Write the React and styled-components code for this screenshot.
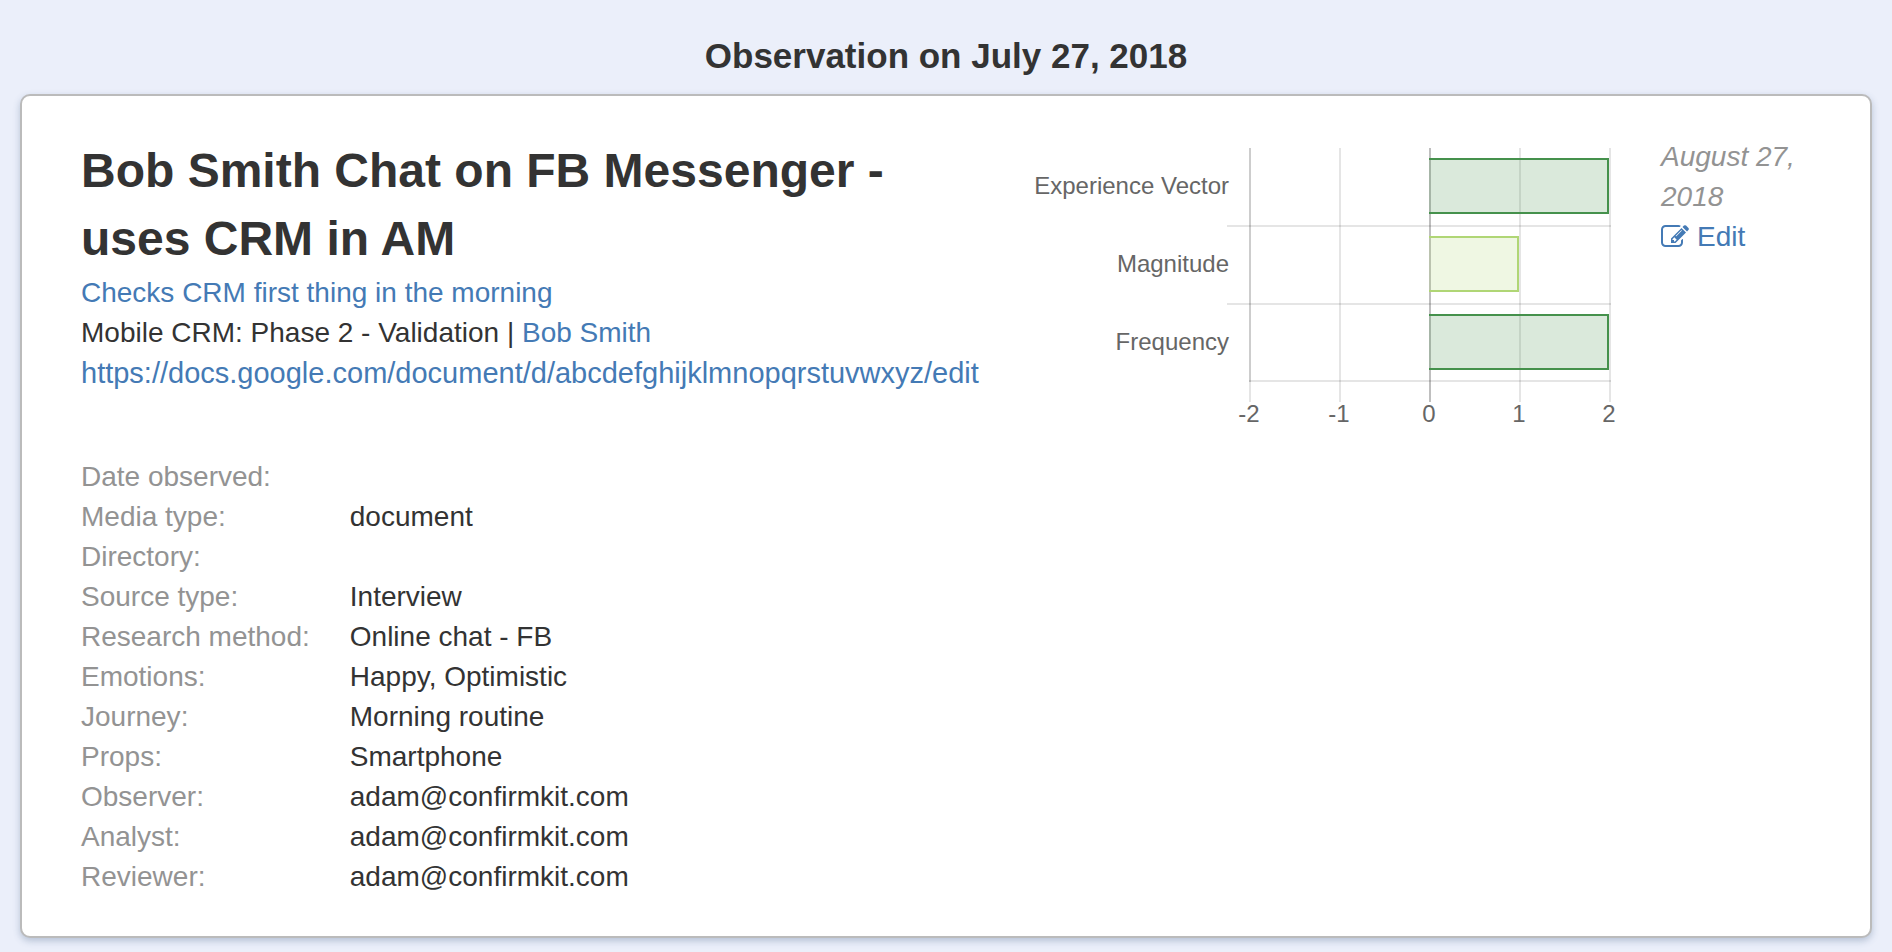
import React from 'react'
import styled, {createGlobalStyle} from "styled-components";

const GlobalStyle = createGlobalStyle`
  * {
    box-sizing: border-box;
  }

  body {
    margin: 0;
    background: #ebeffa;
    color: #333;
    font-family: "Helvetica Neue", "Liberation Sans", Arial, sans-serif;
    font-size: 28px;
    line-height: 40px;
  }
`;

const Page = styled.main`
  padding: 36px 20px 14px;
`;

const PageTitle = styled.h2`
  margin: 0 0 18px;
  font-size: 35px;
  line-height: 40px;
  font-weight: bold;
  text-align: center;
`;

const Card = styled.article`
  padding: 41px 59px 39px;
  background: #fff;
  border: 2px solid #bbb;
  border-radius: 10px;
  box-shadow: 0 3px 7px rgba(60, 90, 130, 0.3);
`;

const CardTop = styled.div`
  display: grid;
  grid-template-columns: minmax(0, 1fr) 600px 150px;
  column-gap: 40px;
  margin-bottom: 20px;
`;

const Summary = styled.div`
  white-space: nowrap;
`;

const Title = styled.h3`
  margin: 0;
  font-size: 48px;
  line-height: 68px;
  font-weight: bold;
  white-space: normal;
`;

const Link = styled.a`
  color: #447ab5;
  text-decoration: none;

  &:hover {
    text-decoration: underline;
  }
`;

const SourceLink = styled(Link)`
  display: block;
  font-size: 29px;
`;

const DateText = styled.div`
  color: #939393;
  font-style: italic;
`;

const EditLink = styled(Link)`
  display: flex;
  align-items: center;
  gap: 8px;
`;

const ChartSvg = styled.svg`
  display: block;
  width: 100%;
  height: auto;
  font-size: 24px;
  fill: #666;
`;

const Details = styled.dl`
  display: grid;
  grid-template-columns: max-content 1fr;
  column-gap: 40px;
  grid-auto-rows: 40px;
  margin: 0;
`;

const Label = styled.dt`
  color: #939393;
`;

const Value = styled.dd`
  margin: 0;
`;

const scores = [
    {name: 'Experience Vector', value: 2, color: '#45914c'},
    {name: 'Magnitude', value: 1, color: '#b0d675'},
    {name: 'Frequency', value: 2, color: '#45914c'}
];

const ticks = [-2, -1, 0, 1, 2];

const details = [
    {label: 'Date observed', value: ''},
    {label: 'Media type', value: 'document'},
    {label: 'Directory', value: ''},
    {label: 'Source type', value: 'Interview'},
    {label: 'Research method', value: 'Online chat - FB'},
    {label: 'Emotions', value: 'Happy, Optimistic'},
    {label: 'Journey', value: 'Morning routine'},
    {label: 'Props', value: 'Smartphone'},
    {label: 'Observer', value: 'adam@confirmkit.com'},
    {label: 'Analyst', value: 'adam@confirmkit.com'},
    {label: 'Reviewer', value: 'adam@confirmkit.com'}
];

const EditIcon = () => (
    <svg width="28" height="28" viewBox="0 0 1792 1792" fill="currentColor" aria-hidden="true">
        <path d="M888 1184l116-116-152-152-116 116v56h96v96h56zm440-720q-16-16-33 1l-350 350q-17 17-1 33t33-1l350-350q17-17 1-33zm80 594v190q0 119-84.5 203.5t-203.5 84.5h-832q-119 0-203.5-84.5t-84.5-203.5v-832q0-119 84.5-203.5t203.5-84.5h832q63 0 117 25 15 7 18 23 3 17-9 29l-49 49q-14 14-32 8-23-6-45-6h-832q-66 0-113 47t-47 113v832q0 66 47 113t113 47h832q66 0 113-47t47-113v-126q0-13 9-22l64-64q15-15 35-7t20 29zm-96-738l288 288-672 672h-288v-288zm444 132l-92 92-288-288 92-92q28-28 68-28t68 28l152 152q28 28 28 68t-28 68z"/>
    </svg>
);

// plot area: x from 230 to 590, rows 78px high starting at 12
const toX = (value) => 410 + value * 90;
const toY = (row) => 12 + row * 78;

const ScoreChart = () => (
    <ChartSvg viewBox="1 1 600 300" role="img" aria-label="Observation scores">
        {ticks.map((tick) => (
            <g key={tick}>
                <line x1={toX(tick)} x2={toX(tick)} y1="12" y2="266"
                      stroke="#000" strokeOpacity={tick === 0 ? 0.25 : 0.1} strokeWidth="2"/>
                <text x={toX(tick) - 1} y="286" textAnchor="middle">{tick}</text>
            </g>
        ))}
        <line x1="230" x2="230" y1="12" y2="246" stroke="#000" strokeOpacity="0.1" strokeWidth="2"/>
        <line x1="229" x2="591" y1="245" y2="245" stroke="#000" strokeOpacity="0.1" strokeWidth="2"/>
        {scores.map((score, index) => (
            <g key={score.name}>
                {index > 0 &&
                <line x1="207" x2="591" y1={toY(index)} y2={toY(index)}
                      stroke="#000" strokeOpacity="0.1" strokeWidth="2"/>}
                <text x="209" y={toY(index) + 46} textAnchor="end">{score.name}</text>
                <rect x="409" y={toY(index) + 10} width={score.value * 90} height="56"
                      fill={score.color} fillOpacity="0.2"/>
                <path d={`M409 ${toY(index) + 11}H${toX(score.value) - 2}v54H409`}
                      fill="none" stroke={score.color} strokeWidth="2"/>
            </g>
        ))}
    </ChartSvg>
);

const App = () => {
    return (
        <>
            <GlobalStyle/>
            <Page>
                <PageTitle>Observation on July 27, 2018</PageTitle>
                <Card>
                    <CardTop>
                        <Summary>
                            <Title>Bob Smith Chat on FB Messenger - uses CRM in AM</Title>
                            <div><Link href="#insight">Checks CRM first thing in the morning</Link></div>
                            <div>Mobile CRM: Phase 2 - Validation | <Link href="#person">Bob Smith</Link></div>
                            <SourceLink href="#document">https://docs.google.com/document/d/abcdefghijklmnopqrstuvwxyz/edit</SourceLink>
                        </Summary>
                        <ScoreChart/>
                        <div>
                            <DateText>August 27, 2018</DateText>
                            <EditLink href="#edit"><EditIcon/>Edit</EditLink>
                        </div>
                    </CardTop>
                    <Details>
                        {details.map((item) => (
                            <React.Fragment key={item.label}>
                                <Label>{item.label}:</Label>
                                <Value>{item.value}</Value>
                            </React.Fragment>
                        ))}
                    </Details>
                </Card>
            </Page>
        </>
    );
};

export default App
